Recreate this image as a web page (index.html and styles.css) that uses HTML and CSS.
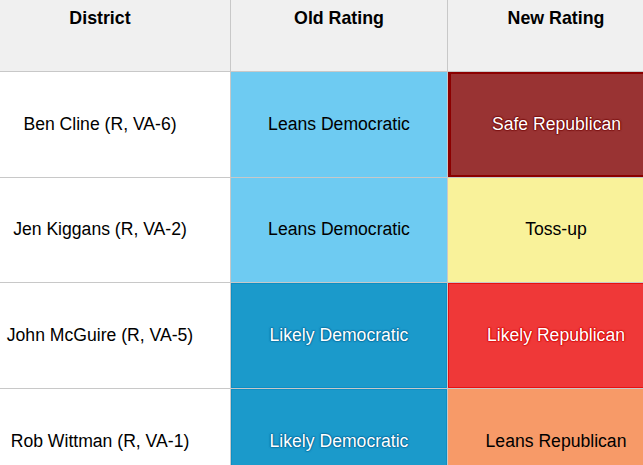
FILE: index.html
```html
<!DOCTYPE html>
<html>
<head>
<meta charset="utf-8">
<link rel="stylesheet" href="styles.css">
</head>
<body>
<div class="frame">
<div class="table">
  <div class="cell head">District</div>
  <div class="cell head">Old Rating</div>
  <div class="cell head">New Rating</div>

  <div class="cell name">Ben Cline (R, VA-6)</div>
  <div class="cell leans-d">Leans Democratic</div>
  <div class="cell safe-r">Safe Republican</div>

  <div class="cell name">Jen Kiggans (R, VA-2)</div>
  <div class="cell leans-d">Leans Democratic</div>
  <div class="cell toss">Toss-up</div>

  <div class="cell name">John McGuire (R, VA-5)</div>
  <div class="cell likely-d">Likely Democratic</div>
  <div class="cell likely-r">Likely Republican</div>

  <div class="cell name">Rob Wittman (R, VA-1)</div>
  <div class="cell likely-d">Likely Democratic</div>
  <div class="cell leans-r">Leans Republican</div>
</div>
</div>
</body>
</html>
```
FILE: styles.css
```css
html, body {
  margin: 0;
  padding: 0;
  background: #ffffff;
}
body {
  font-family: "Liberation Sans", Arial, sans-serif;
  color: #000;
}
.frame {
  width: 643px;
  height: 465px;
  overflow: hidden;
}
.table {
  display: grid;
  grid-template-columns: 260px 216px 216px;
  grid-template-rows: 71px 105px 104px 105px 105px;
  gap: 1px;
  background: #c8c8c8;
  margin-left: -30px;
  width: 694px;
}
.cell {
  display: flex;
  align-items: center;
  justify-content: center;
  font-size: 17.6px;
  background: #ffffff;
  box-sizing: border-box;
  padding-bottom: 1px;
}
.head {
  background: #f0f0f0;
  font-weight: bold;
  font-size: 17.8px;
  align-items: flex-start;
  padding-top: 8px;
  padding-bottom: 0;
}
.name { background: #ffffff; }
.leans-d { background: #6ecbf2; }
.likely-d {
  background: #1b9acb;
  border: 1px solid #0d8fc4;
  color: #ffffff;
  text-shadow: 0 0 2px #05699a, 0 0 2px #05699a, 0 0 1px #05699a, 0 0 1px #05699a, 0 0 1px #05699a;
}
.safe-r {
  background: #993333;
  border: 2px solid #8b0000;
  border-left-width: 3px;
  color: #ffffff;
  text-shadow: 0 0 2px #700000, 0 0 2px #700000, 0 0 1px #700000, 0 0 1px #700000, 0 0 1px #700000;
}
.toss { background: #f9f29a; }
.likely-r {
  background: #ef3838;
  border: 1px solid #e81010;
  color: #ffffff;
  text-shadow: 0 0 2px #d00000, 0 0 2px #d00000, 0 0 1px #d00000, 0 0 1px #d00000, 0 0 1px #d00000;
}
.leans-r { background: #f79a68; }
```
